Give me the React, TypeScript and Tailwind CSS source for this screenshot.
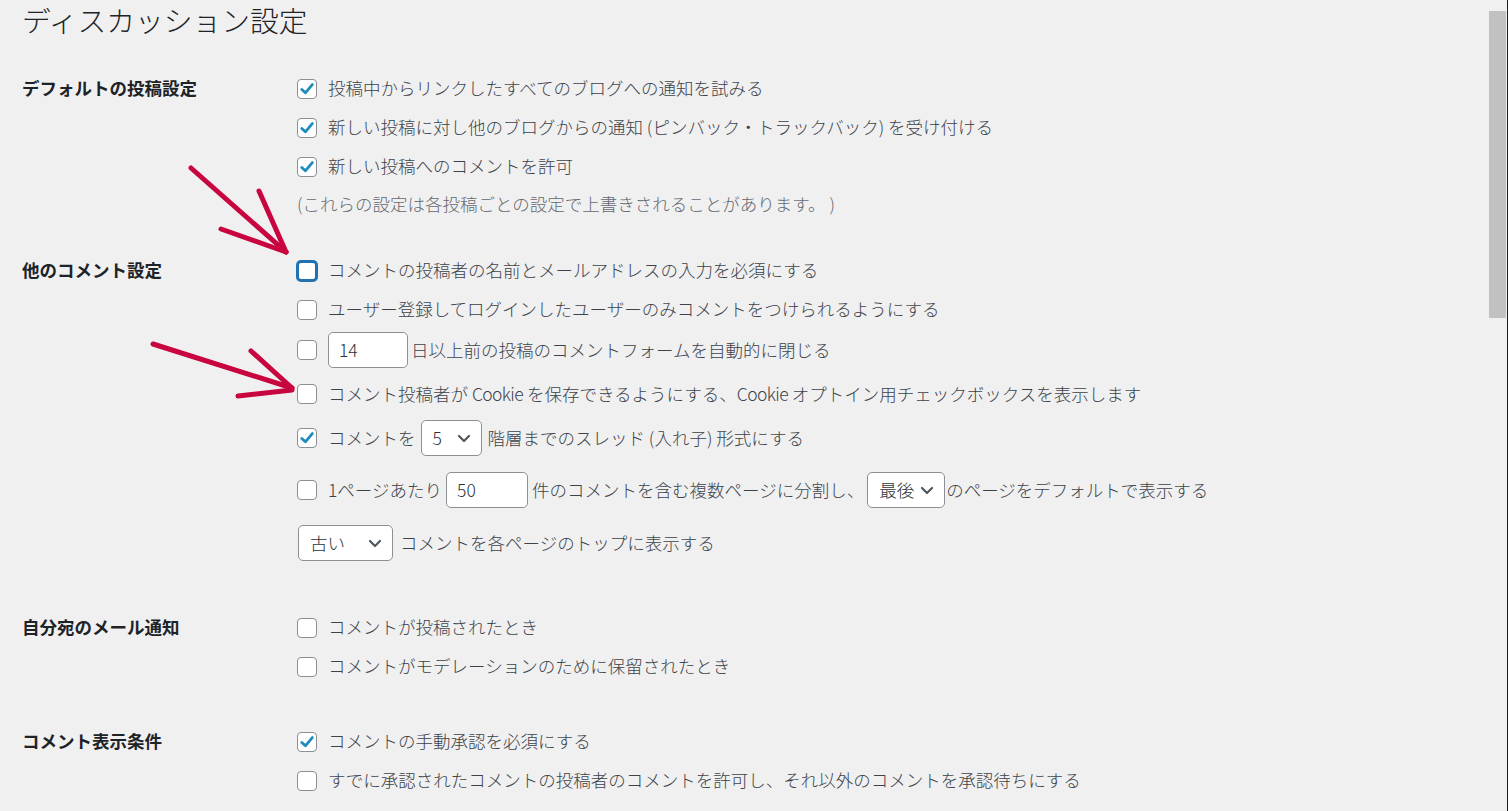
import React from "react";

function Box({ checked = false, focus = false }: { checked?: boolean; focus?: boolean }) {
  return (
    <span
      className={
        "relative inline-flex h-[20px] w-[20px] shrink-0 items-center justify-center rounded-[4px] bg-white " +
        (focus
          ? "border-2 border-[#2271b1] shadow-[0_0_0_1px_#2271b1]"
          : "border border-[#8c8f94]")
      }
    >
      {checked && (
        <svg width="14" height="12" viewBox="0 0 14 12">
          <path
            d="M1.8 6.4 L5.4 9.8 L12.3 1.6"
            fill="none"
            stroke="#1e8cbe"
            strokeWidth="2.8"
            strokeLinecap="round"
            strokeLinejoin="round"
          />
        </svg>
      )}
    </span>
  );
}

function Chevron() {
  return (
    <svg width="14" height="9" viewBox="0 0 14 9" className="shrink-0">
      <polyline
        points="2,2 7,7 12,2"
        fill="none"
        stroke="#50575e"
        strokeWidth="2.2"
        strokeLinecap="round"
        strokeLinejoin="round"
      />
    </svg>
  );
}

function Select({ value, width }: { value: string; width: string }) {
  return (
    <span
      className={
        "inline-flex h-[36px] shrink-0 items-center justify-between rounded-[5px] border border-[#8c8f94] bg-white pl-[11px] pr-[10px] text-[#2c3338] " +
        width
      }
    >
      <span>{value}</span>
      <Chevron />
    </span>
  );
}

function Field({ value, width }: { value: string; width: string }) {
  return (
    <span
      className={
        "inline-flex h-[36px] shrink-0 items-center rounded-[5px] border border-[#8c8f94] bg-white pl-[10px] text-[#2c3338] " +
        width
      }
    >
      {value}
    </span>
  );
}

function Row({
  h = "h-[39px]",
  children,
}: {
  h?: string;
  children: React.ReactNode;
}) {
  return <div className={"flex items-center whitespace-nowrap " + h}>{children}</div>;
}

function Section({
  label,
  className = "",
  children,
}: {
  label: string;
  className?: string;
  children: React.ReactNode;
}) {
  return (
    <div className={"flex " + className}>
      <div className="flex h-[39px] w-[275px] shrink-0 items-center font-bold text-[#1d2327]">
        {label}
      </div>
      <div className="flex flex-col font-light">{children}</div>
    </div>
  );
}

export default function App() {
  return (
    <div className="relative h-[811px] w-full overflow-hidden bg-[#f0f0f1] pl-[22px] font-['Noto_Sans_CJK_JP','Noto_Sans',sans-serif] text-[17.5px] text-[#3c434a]">
      {/* Title */}
      <h1 className="h-[40px] text-[28.75px] font-light leading-[40px] text-[#1d2327]">
        ディスカッション設定
      </h1>

      {/* デフォルトの投稿設定 */}
      <Section label="デフォルトの投稿設定" className="mt-[29px]">
        <Row>
          <Box checked />
          <span className="ml-[11px]">投稿中からリンクしたすべてのブログへの通知を試みる</span>
        </Row>
        <Row>
          <Box checked />
          <span className="ml-[11px]">
            新しい投稿に対し他のブログからの通知 (ピンバック・トラックバック) を受け付ける
          </span>
        </Row>
        <Row>
          <Box checked />
          <span className="ml-[11px]">新しい投稿へのコメントを許可</span>
        </Row>
        <Row h="h-[36px]">
          <span className="text-[#646970]">
            (これらの設定は各投稿ごとの設定で上書きされることがあります。 )
          </span>
        </Row>
      </Section>

      {/* 他のコメント設定 */}
      <Section label="他のコメント設定" className="mt-[29px]">
        <Row>
          <Box focus />
          <span className="ml-[11px]">コメントの投稿者の名前とメールアドレスの入力を必須にする</span>
        </Row>
        <Row>
          <Box />
          <span className="ml-[11px]">ユーザー登録してログインしたユーザーのみコメントをつけられるようにする</span>
        </Row>
        <Row h="h-[42px]">
          <Box />
          <span className="ml-[11px] flex items-center">
            <Field value="14" width="w-[80px]" />
            <span className="ml-[3px]">日以上前の投稿のコメントフォームを自動的に閉じる</span>
          </span>
        </Row>
        <Row h="h-[46px]">
          <Box />
          <span className="ml-[11px]">
            コメント投稿者が <span className="tracking-[-0.6px]">Cookie</span> を保存できるようにする、
            <span className="tracking-[-0.6px]">Cookie</span> オプトイン用チェックボックスを表示します
          </span>
        </Row>
        <Row h="h-[42px]">
          <Box checked />
          <span className="ml-[11px]">コメントを</span>
          <span className="ml-[5px]">
            <Select value="5" width="w-[61px]" />
          </span>
          <span className="ml-[6px]">階層までのスレッド (入れ子) 形式にする</span>
        </Row>
        <Row h="h-[62px]">
          <Box />
          <span className="ml-[11px]">1ページあたり</span>
          <span className="ml-[4px]">
            <Field value="50" width="w-[82px]" />
          </span>
          <span className="ml-[4px]">件のコメントを含む複数ページに分割し、</span>
          <span className="ml-[3px]">
            <Select value="最後" width="w-[78px]" />
          </span>
          <span className="ml-[1px]">のページをデフォルトで表示する</span>
        </Row>
        <Row h="h-[44px]">
          <span className="ml-[1px]">
            <Select value="古い" width="w-[95px]" />
          </span>
          <span className="ml-[7px]">コメントを各ページのトップに表示する</span>
        </Row>
      </Section>

      {/* 自分宛のメール通知 */}
      <Section label="自分宛のメール通知" className="mt-[43px]">
        <Row>
          <Box />
          <span className="ml-[11px]">コメントが投稿されたとき</span>
        </Row>
        <Row>
          <Box />
          <span className="ml-[11px]">コメントがモデレーションのために保留されたとき</span>
        </Row>
      </Section>

      {/* コメント表示条件 */}
      <Section label="コメント表示条件" className="mt-[36px]">
        <Row>
          <Box checked />
          <span className="ml-[11px]">コメントの手動承認を必須にする</span>
        </Row>
        <Row>
          <Box />
          <span className="ml-[11px]">
            すでに承認されたコメントの投稿者のコメントを許可し、それ以外のコメントを承認待ちにする
          </span>
        </Row>
      </Section>

      {/* annotation arrows */}
      <svg
        className="pointer-events-none absolute left-0 top-0"
        width="1508"
        height="811"
        viewBox="0 0 1508 811"
      >
        <g fill="none" stroke="#c8053f" strokeWidth="5" strokeLinecap="round" strokeLinejoin="round">
          <path d="M191 168 L286 252" />
          <path d="M259 191 L286 252" />
          <path d="M221 229 L286 252" />
          <path d="M153 344 L292 388" />
          <path d="M251 351 L292 388" />
          <path d="M238 396 L292 390" />
        </g>
      </svg>

      {/* scrollbar */}
      <div className="absolute right-[2px] top-[11px] h-[307px] w-[17px] bg-[#c1c1c1]" />
      <div className="absolute right-0 top-0 h-full w-px bg-[#1e1e1e]" />
    </div>
  );
}
